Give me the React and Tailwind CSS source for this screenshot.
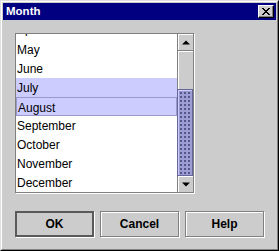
import React from "react";

const months = ["April", "May", "June", "July", "August", "September", "October", "November", "December"];

function Row({ name }) {
  const sel = name === "July" || name === "August";
  const focus = name === "August";
  const first = name === "April";
  return (
    <div
      className={
        "h-[19px] pl-[1px] text-[12px] text-black whitespace-nowrap " +
        (first ? "leading-[16px] " : "leading-[20px] ") +
        (sel ? "bg-[#ccccff] " : "") +
        (focus ? "border border-[#9999cc] pl-0 leading-[18px]" : "")
      }
    >
      {name}
    </div>
  );
}

function ArrowButton({ up }) {
  return (
    <div className="h-[16px] w-full bg-[#cccccc] border-l border-[#808080] shadow-[inset_1px_1px_0_#fff] flex items-center justify-center">
      <svg width="8" height="5" viewBox="0 0 8 5">
        {up ? <path d="M0 4.5 L4 0.5 L8 4.5 Z" fill="#000" /> : <path d="M0 0.5 L8 0.5 L4 4.5 Z" fill="#000" />}
      </svg>
    </div>
  );
}

function Btn({ label, def }) {
  return (
    <div
      className={
        "w-[79px] h-[26px] flex items-center justify-center text-[12px] font-bold text-black bg-[#cccccc] " +
        (def
          ? "border-2 border-[#5a5a5a] shadow-[1px_1px_0_#fff]"
          : "border border-[#808080] shadow-[inset_1px_1px_0_#fff,1px_1px_0_#fff]")
      }
    >
      {label}
    </div>
  );
}

export default function App() {
  return (
    <div className="w-[279px] h-[251px] bg-[#cccccc] border border-t-[#dfdfdf] border-l-[#dfdfdf] border-r-black border-b-black font-['Liberation_Sans',Arial,sans-serif] select-none">
      <div className="h-full border border-t-white border-l-white border-r-[#808080] border-b-[#808080] p-px flex flex-col">
        <div className="h-[17px] bg-[#000080] flex items-center justify-between pl-[3px] pr-[2px]">
          <span className="text-white font-bold text-[11.5px] leading-none">Month</span>
          <div className="w-[16px] h-[13px] bg-[#cccccc] border border-t-white border-l-white border-r-black border-b-black shadow-[inset_-1px_-1px_0_#808080] flex items-center justify-center">
            <svg width="8" height="7" viewBox="0 0 8 7" shapeRendering="crispEdges">
              <path d="M0 0h2v1h-2zM6 0h2v1h-2zM1 1h2v1h-2zM5 1h2v1h-2zM2 2h4v1h-4zM3 3h2v1h-2zM2 4h4v1h-4zM1 5h2v1h-2zM5 5h2v1h-2zM0 6h2v1h-2zM6 6h2v1h-2z" fill="#000" />
            </svg>
          </div>
        </div>
        <div className="flex-1 flex flex-col px-[12px] pt-[13px]">
          <div className="w-[179px] h-[160px] border border-[#808080] shadow-[1px_1px_0_#fff] bg-white flex">
            <div className="flex-1 overflow-hidden">
              <div className="-mt-[13px]">
                {months.map((m) => (
                  <Row key={m} name={m} />
                ))}
              </div>
            </div>
            <div className="w-[16px] flex flex-col">
              <ArrowButton up />
              <div className="h-[39px] bg-[#cccccc] border-l border-t border-[#808080] shadow-[inset_1px_1px_0_#fff]" />
              <div className="h-[87px] border border-[#666699] bg-[#9d9dd6] bg-[radial-gradient(circle_at_1px_1px,#dcdcff_0.6px,transparent_0.7px),radial-gradient(circle_at_3px_3px,#55558a_0.8px,transparent_0.9px)] bg-size-[4px_4px] shadow-[inset_1px_1px_0_#ccccff]" />
              <ArrowButton />
            </div>
          </div>
          <div className="mt-[18px] flex gap-[6px]">
            <Btn label="OK" def />
            <Btn label="Cancel" />
            <Btn label="Help" />
          </div>
        </div>
      </div>
    </div>
  );
}
